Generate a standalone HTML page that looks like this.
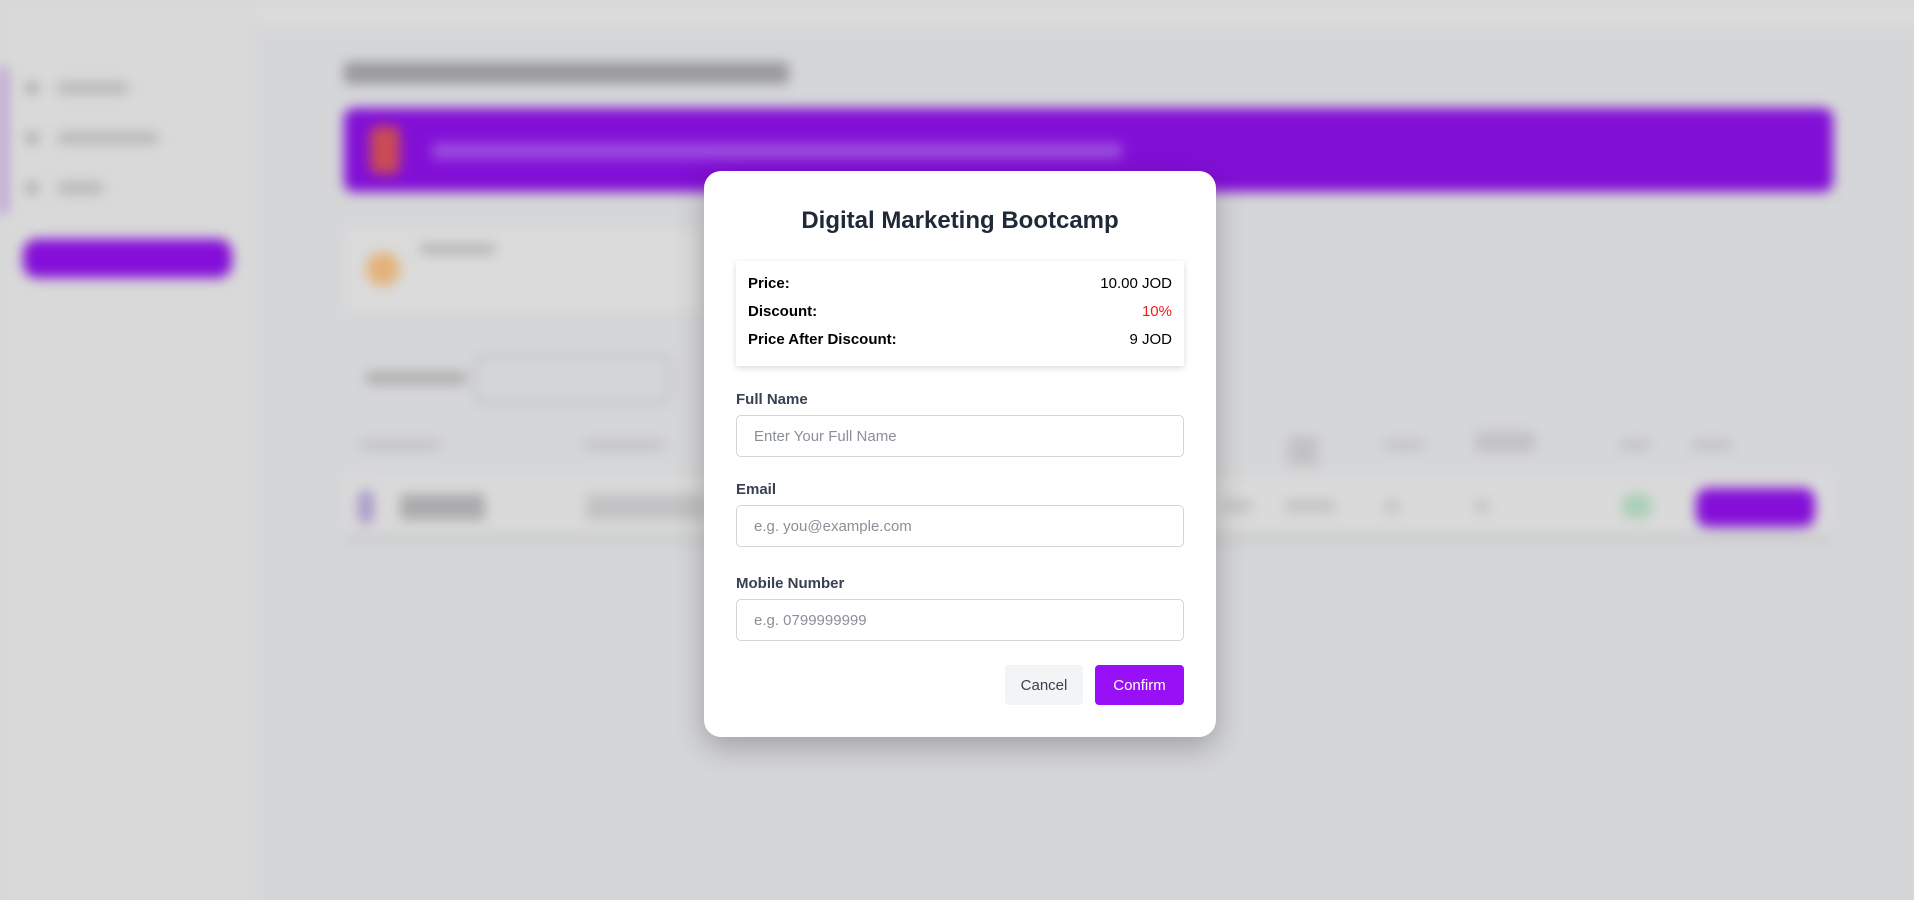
<!DOCTYPE html>
<html><head><meta charset="utf-8">
<style>
*{box-sizing:border-box;margin:0;padding:0}
html,body{width:1914px;height:900px;overflow:hidden;background:#d5d6d8;font-family:"Liberation Sans",sans-serif}
#wrap{position:relative;width:1914px;height:900px;overflow:hidden}
#bg{position:absolute;left:-20px;top:-20px;width:1954px;height:940px;filter:blur(6px);background:#d5d6d8}
#bg>div{position:absolute}
.modal{position:absolute;left:704px;top:171px;width:512px;height:566px;background:#fff;border-radius:17px;box-shadow:0 10px 30px rgba(0,0,0,.25);padding:0 32px}
.modal h2{position:absolute;left:0;right:0;text-align:center;font-size:24px;font-weight:bold;color:#1f2937}
.box{position:absolute;left:32px;width:448px;top:90px;height:105px;box-shadow:0 2px 6px rgba(0,0,0,.15);padding:11px 12px;font-size:15px;color:#000}
.row{display:flex;justify-content:space-between;height:28px;line-height:24px}
.lbl{position:absolute;left:32px;font-size:15px;color:#374151;font-weight:bold}
.inp{position:absolute;left:32px;width:448px;height:42px;border:1px solid #d1d5db;border-radius:5px;padding-left:17px;line-height:42px;font-size:15px;color:#8a8f98}
.btn{position:absolute;top:494px;height:40px;border-radius:4px;line-height:41px;text-align:center;font-size:15px}
</style></head><body>
<div id="wrap">
<div id="bg">
  <div style="left:20px;top:20px;width:256px;height:920px;background:#d9d9d9"></div>
  <div style="left:276px;top:20px;width:1678px;height:30px;background:#dbdbdc;border-bottom:2px solid #d0d1d3"></div>
  <div style="left:20px;top:87px;width:7px;height:147px;background:#b58bd6;border-radius:3px"></div>
  <div style="left:46px;top:102px;width:12px;height:12px;background:#aaa;border-radius:3px"></div>
  <div style="left:78px;top:102px;width:70px;height:12px;background:#b8b8b8"></div>
  <div style="left:46px;top:152px;width:12px;height:12px;background:#aaa;border-radius:3px"></div>
  <div style="left:78px;top:152px;width:100px;height:12px;background:#b8b8b8"></div>
  <div style="left:46px;top:202px;width:12px;height:12px;background:#aaa;border-radius:3px"></div>
  <div style="left:78px;top:202px;width:45px;height:12px;background:#b8b8b8"></div>
  <div style="left:43px;top:259px;width:209px;height:39px;background:#850fd8;border-radius:14px"></div>
  <div style="left:364px;top:82px;width:445px;height:22px;background:#9a9a9c;border-radius:3px"></div>
  <div style="left:364px;top:128px;width:1489px;height:84px;background:#820fd6;border-radius:10px"></div>
  <div style="left:390px;top:146px;width:30px;height:48px;background:#c94b55;border-radius:8px"></div>
  <div style="left:452px;top:163px;width:690px;height:16px;background:#9d4ee0;border-radius:3px"></div>
  <div style="left:364px;top:249px;width:360px;height:82px;background:#dbdbdb;border-radius:8px"></div>
  <div style="left:386px;top:272px;width:34px;height:34px;background:#e4b27a;border-radius:50%"></div>
  <div style="left:440px;top:264px;width:75px;height:10px;background:#b3b3b3"></div>
  <div style="left:386px;top:392px;width:100px;height:12px;background:#adadad"></div>
  <div style="left:494px;top:374px;width:197px;height:51px;border:4px solid #c2c2c4;border-radius:10px"></div>
  <div style="left:380px;top:460px;width:80px;height:10px;background:#c2c2c4"></div>
  <div style="left:604px;top:460px;width:80px;height:10px;background:#c2c2c4"></div>
  <div style="left:1308px;top:456px;width:30px;height:30px;background:#c2c2c4"></div>
  <div style="left:1404px;top:460px;width:40px;height:10px;background:#c2c2c4"></div>
  <div style="left:1495px;top:452px;width:60px;height:20px;background:#c2c2c4"></div>
  <div style="left:1640px;top:460px;width:30px;height:10px;background:#c2c2c4"></div>
  <div style="left:1712px;top:460px;width:40px;height:10px;background:#c2c2c4"></div>
  <div style="left:364px;top:496px;width:1487px;height:56px;background:#dadada"></div>
  <div style="left:364px;top:552px;width:1487px;height:14px;background:#cecfd0"></div>
  <div style="left:378px;top:510px;width:16px;height:34px;background:#a99bc9;border-radius:8px"></div>
  <div style="left:420px;top:514px;width:85px;height:26px;background:#ababad"></div>
  <div style="left:606px;top:514px;width:120px;height:26px;background:#c2c2c4"></div>
  <div style="left:1242px;top:520px;width:30px;height:12px;background:#c2c2c4"></div>
  <div style="left:1305px;top:520px;width:50px;height:12px;background:#c2c2c4"></div>
  <div style="left:1405px;top:520px;width:14px;height:12px;background:#c2c2c4"></div>
  <div style="left:1495px;top:520px;width:14px;height:12px;background:#c2c2c4"></div>
  <div style="left:1642px;top:514px;width:30px;height:24px;background:#a9cfb5;border-radius:10px"></div>
  <div style="left:1716px;top:508px;width:119px;height:39px;background:#850fd8;border-radius:12px"></div>
</div>
<div class="modal">
  <h2 style="top:36px">Digital Marketing Bootcamp</h2>
  <div class="box">
    <div class="row"><b>Price:</b><span>10.00 JOD</span></div>
    <div class="row"><b>Discount:</b><span style="color:#ef1c1c">10%</span></div>
    <div class="row"><b>Price After Discount:</b><span>9 JOD</span></div>
  </div>
  <div class="lbl" style="top:220px">Full Name</div>
  <div class="inp" style="top:244px">Enter Your Full Name</div>
  <div class="lbl" style="top:310px">Email</div>
  <div class="inp" style="top:334px">e.g. you@example.com</div>
  <div class="lbl" style="top:404px">Mobile Number</div>
  <div class="inp" style="top:428px">e.g. 0799999999</div>
  <div class="btn" style="left:301px;width:78px;background:#f3f4f6;color:#374151">Cancel</div>
  <div class="btn" style="left:391px;width:89px;background:#9810f5;color:#fff">Confirm</div>
</div>
</div>
</body></html>
